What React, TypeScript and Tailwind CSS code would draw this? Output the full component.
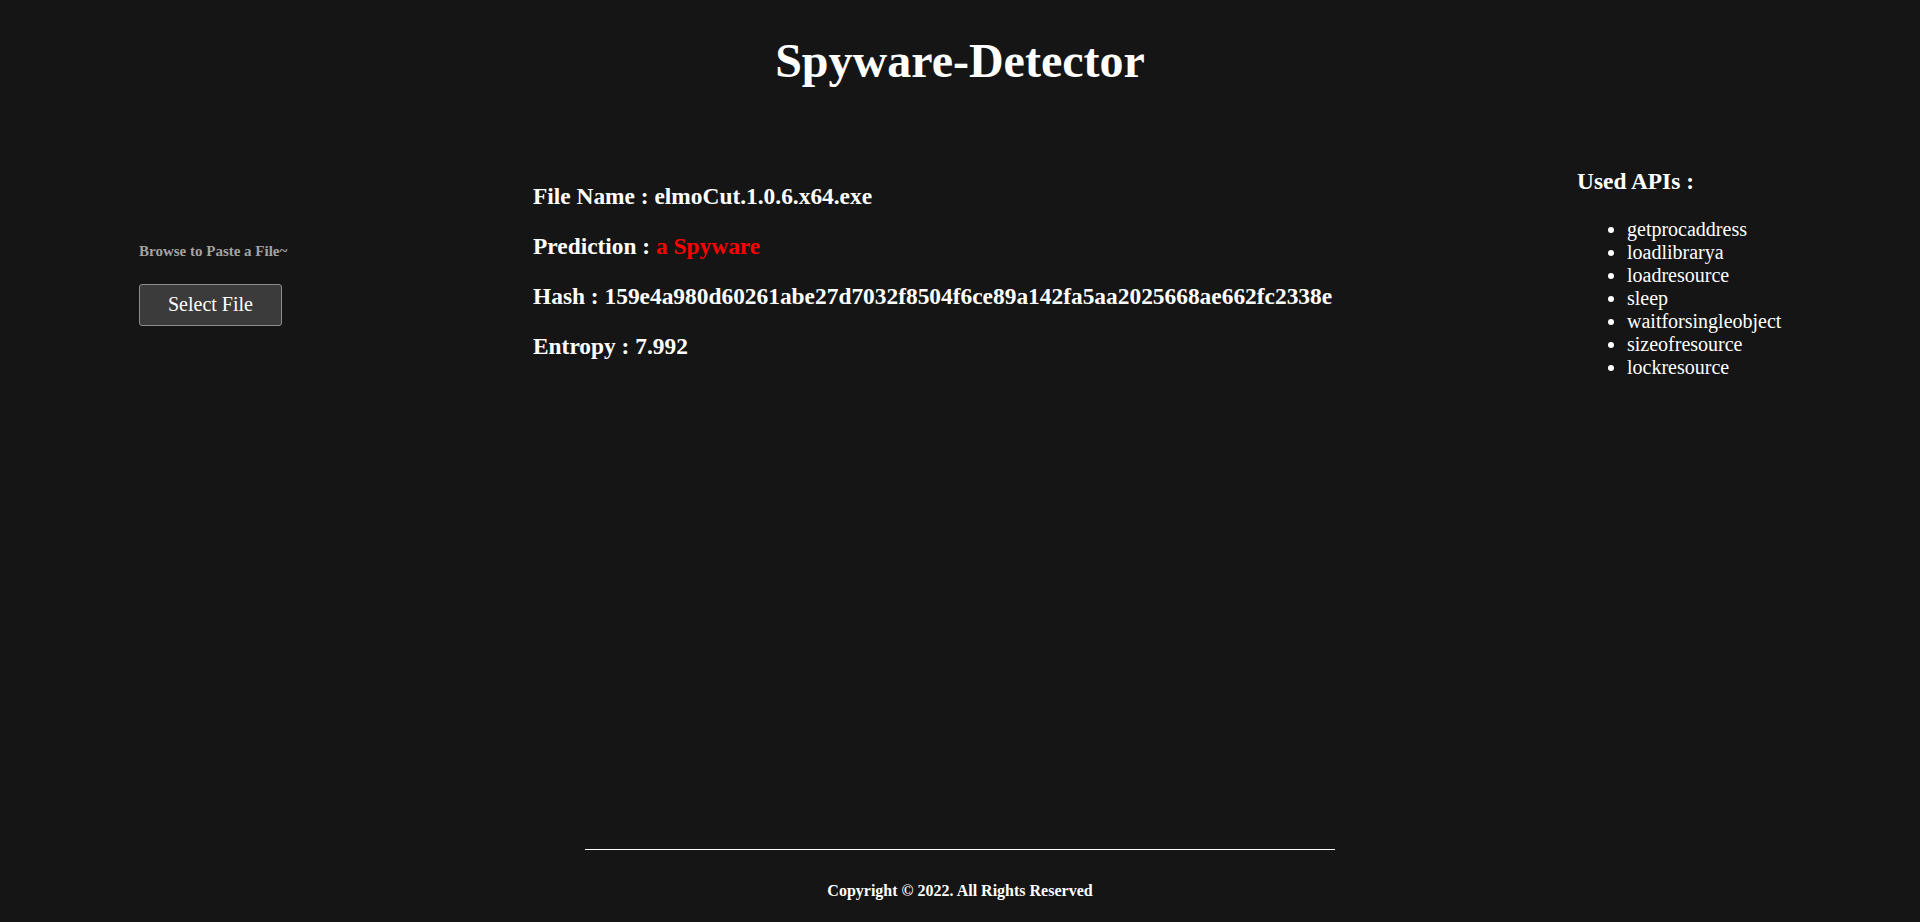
import React from 'react';

const apis = [
  'getprocaddress',
  'loadlibrarya',
  'loadresource',
  'sleep',
  'waitforsingleobject',
  'sizeofresource',
  'lockresource',
];

const App: React.FC = () => {
  return (
    <div className="min-h-screen bg-[#151515] text-white flex flex-col font-['Liberation_Serif','Times_New_Roman',serif]">
      <h1 className="mt-[33px] text-center text-[48px] leading-[55px] font-bold">Spyware-Detector</h1>

      <main className="mt-[56px] flex items-center">
        {/* upload */}
        <div className="w-[533px] shrink-0 pl-[139px] pt-[25px]">
          <h5 className="text-[15px] leading-[16px] font-bold text-[#a3a3a3]">Browse to Paste a File~</h5>
          <button className="mt-[25px] h-[42px] w-[143px] rounded-[3px] border border-[#8c8c8c] bg-[#3b3b3b] text-[20px] leading-[23px] text-white">
            Select File
          </button>
        </div>

        {/* result */}
        <div className="w-[1044px] shrink-0 py-[23.5px] flex flex-col gap-[23.3px]">
          <h3 className="text-[23.4px] leading-[27px] font-bold">File Name : elmoCut.1.0.6.x64.exe</h3>
          <h3 className="text-[23.4px] leading-[27px] font-bold">
            Prediction : <span className="text-[#ff0000]">a Spyware</span>
          </h3>
          <h3 className="text-[23.4px] leading-[27px] font-bold">
            Hash : 159e4a980d60261abe27d7032f8504f6ce89a142fa5aa2025668ae662fc2338e
          </h3>
          <h3 className="text-[23.4px] leading-[27px] font-bold">Entropy : 7.992</h3>
        </div>

        {/* apis */}
        <div className="flex-1 pt-[24px] pb-[20px]">
          <h3 className="text-[23.4px] leading-[27px] font-bold">Used APIs :</h3>
          <ul className="mt-[23px] ml-[10px] pl-[40px] list-disc text-[20px] leading-[23px]">
            {apis.map((api) => (
              <li key={api}>{api}</li>
            ))}
          </ul>
        </div>
      </main>

      <footer className="mt-auto flex flex-col items-center">
        <hr className="w-[750px] border-0 border-t border-white" />
        <h4 className="pt-[32px] pb-[22px] text-[16px] leading-[18px] font-bold">Copyright © 2022. All Rights Reserved</h4>
      </footer>
    </div>
  );
};

export default App;
